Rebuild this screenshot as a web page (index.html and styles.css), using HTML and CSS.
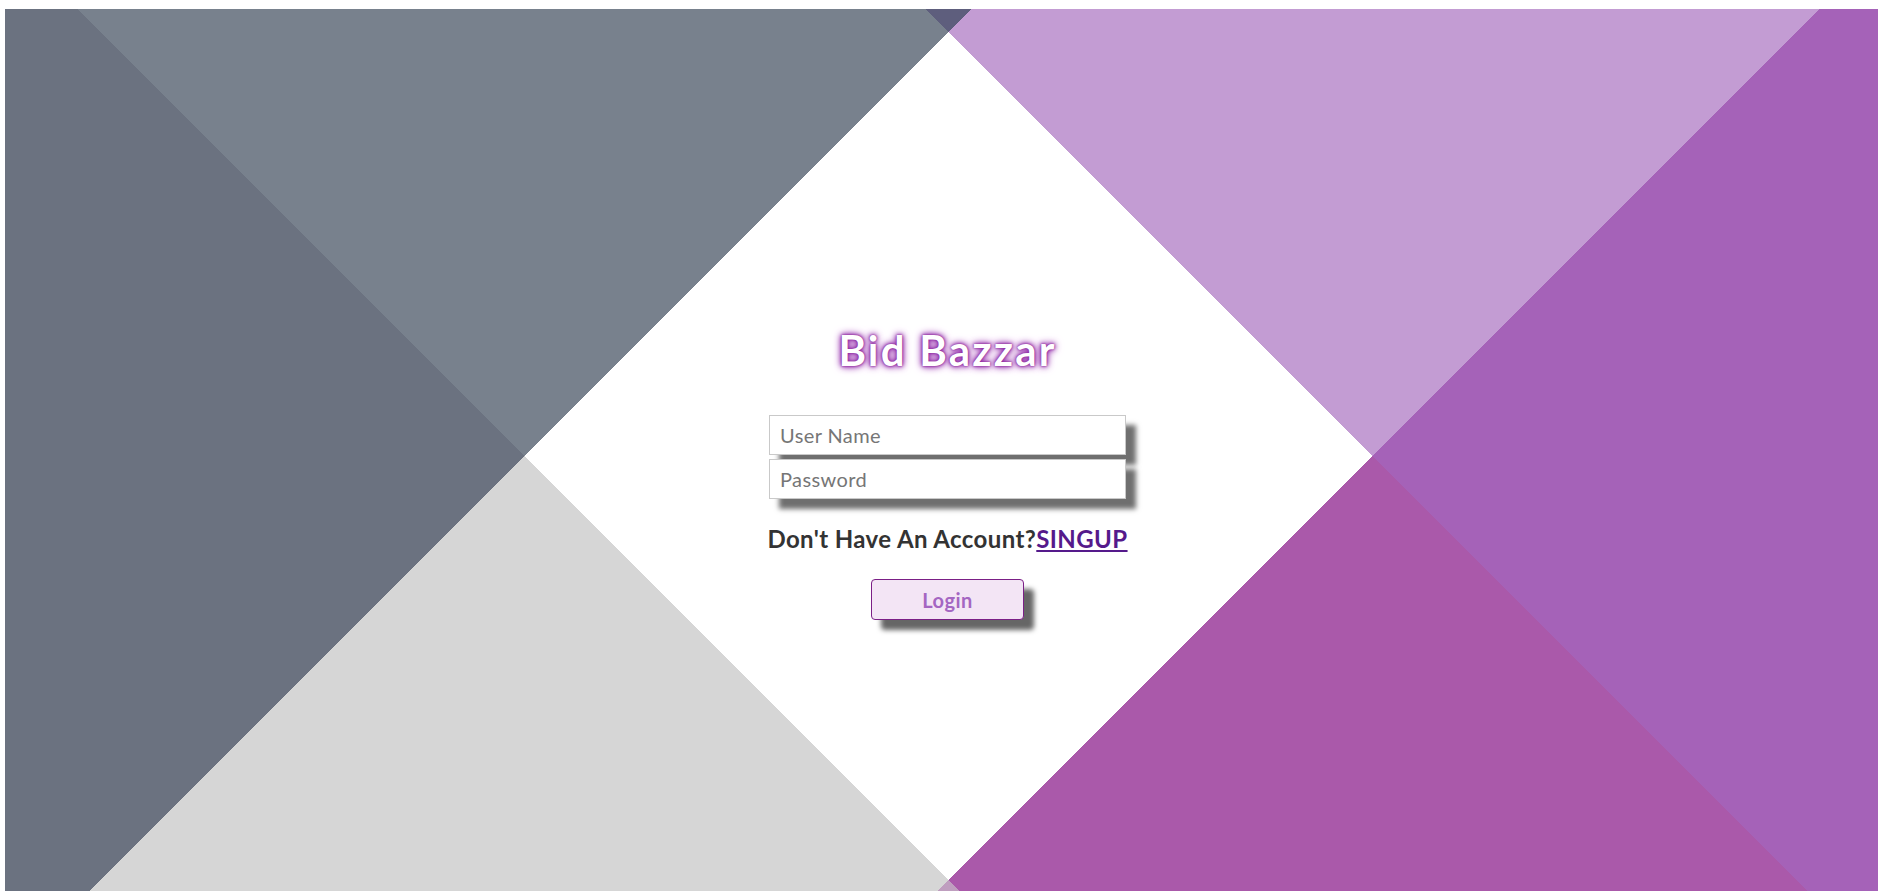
FILE: index.html
```html
<!DOCTYPE html>
<html lang="en">
<head>
<meta charset="utf-8">
<title>Bid Bazzar - Login</title>
<link rel="stylesheet" href="styles.css">
</head>
<body>
<div class="page">
  <div class="canvas">
    <svg class="bg" viewBox="0 0 1873 882" preserveAspectRatio="none" shape-rendering="crispEdges" aria-hidden="true">
      <rect class="c-white" x="0" y="0" width="1873" height="882"/>
      <polygon class="c-dark" points="0,0 72,0 519,447 84,882 0,882"/>
      <polygon class="c-gray-top" points="72,0 966,0 519,447"/>
      <polygon class="c-gray-bottom" points="519,447 954,882 84,882"/>
      <polygon class="c-lilac" points="920,0 1814,0 1367,447"/>
      <polygon class="c-purple" points="1814,0 1873,0 1873,882 1802,882 1367,447"/>
      <polygon class="c-magenta" points="1367,447 1802,882 932,882"/>
      <polygon class="c-over-top" points="920,0 966,0 943,23"/>
      <polygon class="c-over-bottom" points="943,871 954,882 932,882"/>
    </svg>
    <form class="login">
      <h1 class="title">Bid Bazzar</h1>
      <input class="field field-first" type="text" placeholder="User Name">
      <input class="field field-next" type="password" placeholder="Password">
      <p class="signup">Don't Have An Account?<a class="signup-link" href="#">SINGUP</a></p>
      <button class="btn" type="button">Login</button>
    </form>
  </div>
</div>
</body>
</html>
```

FILE: styles.css
```css
html, body {
  margin: 0;
  padding: 0;
  height: 100%;
  overflow: hidden;
  background: #ffffff;
}

.page {
  box-sizing: border-box;
  height: 891px;
  padding: 9px 2px 0 5px;
}

.canvas {
  position: relative;
  width: 1873px;
  height: 882px;
  display: flex;
  flex-direction: column;
  align-items: center;
}

.bg {
  position: absolute;
  left: 0;
  top: 0;
  width: 100%;
  height: 100%;
}

.c-dark { fill: #6b7280; }
.c-gray-top { fill: #78818d; }
.c-gray-bottom { fill: #d6d6d6; }
.c-white { fill: #ffffff; }
.c-lilac { fill: #c39cd3; }
.c-purple { fill: #a562b8; }
.c-magenta { fill: #aa59aa; }
.c-over-top { fill: #5e5e7d; }
.c-over-bottom { fill: #bf9ebf; }

.login {
  position: relative;
  display: flex;
  flex-direction: column;
  align-items: center;
  padding-top: 317px;
  margin: 0 0 0 12px;
  font-family: Lato, "Open Sans", sans-serif;
}

.title {
  margin: 0;
  font-size: 42px;
  line-height: 48px;
  font-weight: 700;
  letter-spacing: 2.2px;
  color: #ffffff;
  text-shadow: 0 0 2px #86208f, 0 0 4px #8e24aa, 0 0 7px #9c3fb0, 0 0 10px #c07ad0;
}

.field {
  box-sizing: border-box;
  width: 357px;
  height: 40px;
  border: 1px solid #c9c9c9;
  padding: 0 10px;
  font-family: Lato, "Open Sans", sans-serif;
  font-size: 20px;
  letter-spacing: 0.4px;
  color: #333;
  background: #fff;
  box-shadow: 10px 10px 5px #6f6f6f;
  outline: none;
}

.field::placeholder {
  color: #767676;
}

.field-first {
  margin-top: 41px;
}

.field-next {
  margin-top: 4px;
}

.signup {
  margin: 25px 0 0;
  font-size: 24px;
  line-height: 29px;
  font-weight: 700;
  letter-spacing: 0.4px;
  color: #333333;
}

.signup-link {
  color: #551a8b;
  text-decoration: underline;
}

.btn {
  box-sizing: border-box;
  margin-top: 26px;
  width: 153px;
  height: 41px;
  background: #f3e5f5;
  border: 1px solid #7b1f86;
  border-radius: 4px;
  font-family: Lato, "Open Sans", sans-serif;
  font-size: 20px;
  font-weight: 700;
  letter-spacing: 0.5px;
  color: #a466c2;
  box-shadow: 10px 10px 5px #666666;
  cursor: pointer;
}
```
